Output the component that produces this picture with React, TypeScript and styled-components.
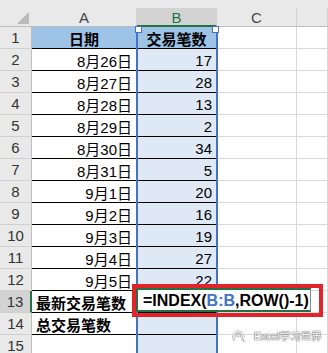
import React from 'react';
import styled, { createGlobalStyle } from 'styled-components';

const Global = createGlobalStyle`
  html, body { margin: 0; padding: 0; background: #fff; overflow: hidden; }
  body { font-family: "Liberation Sans", "Noto Sans CJK SC", sans-serif; }
  * { box-sizing: border-box; }
`;

const Sheet = styled.div`
  position: relative;
  width: 328px;
  height: 353px;
  overflow: hidden;
  display: grid;
  grid-template-columns: 32px 105px 80px 80px 31px;
  grid-template-rows: 8px 19px repeat(15, 22px);
  background: #fff;
`;

const TopStrip = styled.div`
  grid-column: 1 / -1;
  background: #e9e9e9;
`;

const Corner = styled.div`
  background: #e9e9e9;
  border-bottom: 1px solid #bdbdbd;
  display: flex;
  justify-content: flex-end;
  align-items: flex-end;
  padding: 0 3px 2px 0;
`;

const Triangle = styled.div`
  width: 0;
  height: 0;
  border-left: 12px solid transparent;
  border-bottom: 12px solid #b9b9b9;
`;

const ColHead = styled.div<{ $sel?: boolean }>`
  background: ${p => (p.$sel ? '#d3d3d3' : '#e9e9e9')};
  border-right: 1px solid #d0d0d0;
  border-bottom: ${p => (p.$sel ? '2px solid #217346' : '1px solid #bdbdbd')};
  display: flex;
  align-items: center;
  justify-content: center;
  font-size: 15px;
  color: ${p => (p.$sel ? '#217346' : '#444')};
  padding-top: 1px;
`;

const RowHead = styled.div<{ $sel?: boolean }>`
  background: ${p => (p.$sel ? '#d3d3d3' : '#e9e9e9')};
  border-right: ${p => (p.$sel ? '2px solid #217346' : '1px solid #bdbdbd')};
  border-bottom: 1px solid #d0d0d0;
  display: flex;
  align-items: center;
  justify-content: center;
  font-size: 15px;
  color: #333;
`;

const Cell = styled.div<{
  $align?: 'left' | 'right' | 'center';
  $bold?: boolean;
  $fill?: string;
  $table?: boolean;
}>`
  background: ${p => p.$fill || '#fff'};
  border-right: 1px solid ${p => (p.$table ? '#000' : '#d9d9d9')};
  border-bottom: 1px solid ${p => (p.$table ? '#000' : '#d9d9d9')};
  display: flex;
  align-items: center;
  justify-content: ${p =>
    p.$align === 'left' ? 'flex-start' : p.$align === 'center' ? 'center' : 'flex-end'};
  padding: 1px 4px 0 4px;
  font-size: 15px;
  font-weight: ${p => (p.$bold ? 700 : 400)};
  color: #000;
  white-space: nowrap;
`;

const BlueSel = styled.div`
  position: absolute;
  left: 136px;
  top: 27px;
  width: 82px;
  bottom: 0;
  border-left: 2px solid #4672c0;
  border-right: 2px solid #4672c0;
  pointer-events: none;
  &::before,
  &::after {
    content: '';
    position: absolute;
    top: -1px;
    width: 5px;
    height: 5px;
    background: #fff;
    border: 1px solid #4672c0;
  }
  &::before { left: -3px; }
  &::after { right: -3px; }
`;

const Editor = styled.div`
  position: absolute;
  left: 136px;
  top: 288px;
  width: 175px;
  height: 24px;
  background: #fff;
  border: 2px solid #217346;
  border-right: 1px solid #8a8a8a;
  display: flex;
  align-items: center;
  padding: 1px 0 0 5px;
  font-size: 16px;
  font-weight: 700;
  color: #000;
  white-space: nowrap;
`;

const Ref = styled.span`
  color: #4472c4;
`;

const Caret = styled.span`
  display: inline-block;
  width: 1px;
  height: 17px;
  background: #000;
  margin-left: 2px;
`;

const RedBox = styled.div`
  position: absolute;
  left: 132px;
  top: 284px;
  width: 191px;
  height: 33px;
  border: 4px solid #e3232a;
  pointer-events: none;
`;

const Watermark = styled.div`
  position: absolute;
  left: 231px;
  top: 328px;
  display: flex;
  align-items: center;
  gap: 8px;
  font-size: 10.5px;
  color: #ffffff;
  text-shadow: 0 0 1px #555, 0 0 1px #555, 0 0 2px rgba(0, 0, 0, 0.3);
  font-family: "Liberation Sans", "Noto Sans CJK SC", sans-serif;
`;

const WxIcon = () => (
  <svg width="15" height="14" viewBox="0 0 15 14" fill="none">
    <path
      d="M3 10.5 A5 5 0 1 1 11.5 10.5"
      stroke="#9a9a9a"
      strokeWidth="2.2"
      strokeLinecap="round"
    />
    <path
      d="M3 10.5 A5 5 0 1 1 11.5 10.5"
      stroke="#ffffff"
      strokeWidth="1.2"
      strokeLinecap="round"
    />
    <path d="M5 8 A2.5 2.5 0 1 1 9.8 8" stroke="#bdbdbd" strokeWidth="1.4" strokeLinecap="round" />
    <circle cx="7.4" cy="7.2" r="1" fill="#b5b5b5" />
    <path d="M11.5 10.5 L13.5 12.8" stroke="#c8c8c8" strokeWidth="1.4" strokeLinecap="round" />
  </svg>
);

const colA = [
  '日期',
  '8月26日',
  '8月27日',
  '8月28日',
  '8月29日',
  '8月30日',
  '8月31日',
  '9月1日',
  '9月2日',
  '9月3日',
  '9月4日',
  '9月5日',
  '最新交易笔数',
  '总交易笔数',
  '',
];
const colB = ['交易笔数', '17', '28', '13', '2', '34', '5', '20', '16', '19', '27', '22', '', '', ''];

const HEAD_FILL = '#9dc3e6';
const SEL_FILL = '#dfe8f5';

export default function App() {
  return (
    <>
      <Global />
      <Sheet>
        <TopStrip />
        <Corner>
          <Triangle />
        </Corner>
        <ColHead>A</ColHead>
        <ColHead $sel>B</ColHead>
        <ColHead>C</ColHead>
        <ColHead />
        {colA.map((a, i) => {
          const r = i + 1;
          const table = r <= 14;
          const isHead = r === 1;
          const isLabel = r === 13 || r === 14;
          return (
            <React.Fragment key={r}>
              <RowHead $sel={r === 13}>{r}</RowHead>
              <Cell
                $table={table}
                $bold={isHead || isLabel}
                $align={isHead ? 'center' : isLabel ? 'left' : 'right'}
                $fill={isHead ? HEAD_FILL : undefined}
              >
                {a}
              </Cell>
              <Cell
                $table={table}
                $bold={isHead}
                $align={isHead ? 'center' : 'right'}
                $fill={isHead ? HEAD_FILL : SEL_FILL}
              >
                {colB[i]}
              </Cell>
              <Cell />
              <Cell />
            </React.Fragment>
          );
        })}
        <BlueSel />
        <Editor>
          =INDEX(<Ref>B:B</Ref>,ROW()-1)
          <Caret />
        </Editor>
        <RedBox />
        <Watermark>
          <WxIcon />
          <span>Excel学习世界</span>
        </Watermark>
      </Sheet>
    </>
  );
}
